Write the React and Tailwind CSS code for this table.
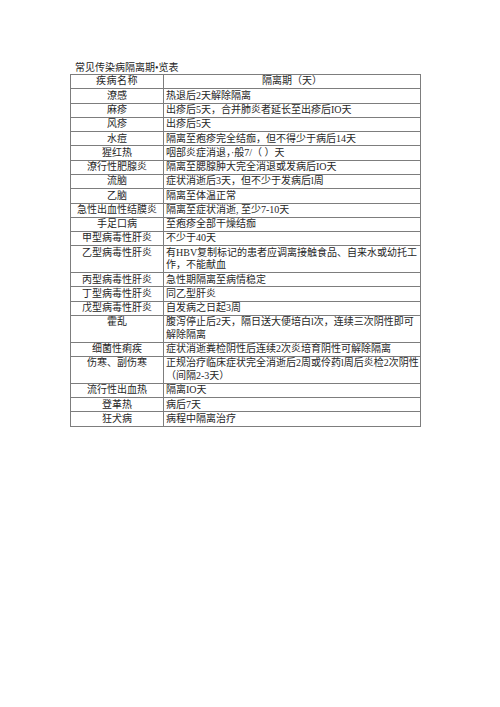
import React from "react";

const rows = [
  { name: "潦感", text: ["热退后2天解除隔离"] },
  { name: "麻疹", text: ["出疹后5天，合并肺炎者延长至出疹后IO天"] },
  { name: "风疹", text: ["出疹后5天"] },
  { name: "水痘", text: ["隔离至疱疹完全结痂，但不得少于病后14天"] },
  { name: "猩红热", text: ["咽部炎症消退，·般7/（ ）天"] },
  { name: "潦行性肥腺炎", text: ["隔离至腮腺肿大完全消退或发病后IO天"] },
  { name: "流脑", text: ["症状消逝后3天，但不少于发病后l周"] },
  { name: "乙脑", text: ["隔离至体温正常"] },
  { name: "急性出血性结膜炎", text: ["隔离至症状消逝, 至少7-10天"] },
  { name: "手足口病", text: ["至疱疹全部干燥结痂"] },
  { name: "甲型病毒性肝炎", text: ["不少于40天"] },
  {
    name: "乙型病毒性肝炎",
    text: ["有HBV复制标记的患者应调离接触食品、自来水或幼托工", "作，不能献血"],
  },
  { name: "丙型病毒性肝炎", text: ["急性期隔离至病情稳定"] },
  { name: "丁型病毒性肝炎", text: ["同乙型肝炎"] },
  { name: "戊型病毒性肝炎", text: ["自发病之日起3周"] },
  {
    name: "霍乱",
    text: ["腹泻停止后2天，隔日送大便培白l次，连续三次阴性即可", "解除隔离"],
  },
  { name: "细菌性痢疾", text: ["症状消逝粪检阴性后连续2次炎培育阴性可解除隔离"] },
  {
    name: "伤寒、副伤寒",
    text: ["正规治疗临床症状完全消逝后2周或伶药l周后炎检2次阴性", "（间隔2-3天）"],
  },
  { name: "流行性出血热", text: ["隔离IO天"] },
  { name: "登革热", text: ["病后7天"] },
  { name: "狂犬病", text: ["病程中隔离治疗"] },
];

export default function App() {
  return (
    <div className="min-h-[707px] w-[500px] bg-white pt-[62px] pl-[70px] font-['Liberation_Serif','Noto_Sans_CJK_SC',serif] text-[10px] text-[#262626]">
      <div className="pl-[5px] leading-[12px]">常见传染病隔离期•览表</div>
      <table className="w-[351px] table-fixed border-collapse border border-[#7d7d7d]">
        <colgroup>
          <col className="w-[93px]" />
          <col />
        </colgroup>
        <tbody>
          <tr>
            <td className="border border-[#7d7d7d] py-[0.4px] text-center align-top leading-[12.5px] tracking-[0.5px]">
              疾病名称
            </td>
            <td className="border border-[#7d7d7d] py-[0.4px] text-center align-top leading-[12.5px]">
              隔离期（天）
            </td>
          </tr>
          {rows.map((r) => (
            <tr key={r.name}>
              <td className="border border-[#7d7d7d] py-[0.4px] text-center align-top leading-[12.5px]">
                {r.name}
              </td>
              <td className="border border-[#7d7d7d] py-[0.4px] pl-[2px] align-top leading-[12.5px] whitespace-nowrap">
                {r.text.map((t, i) => (
                  <div key={i}>{t}</div>
                ))}
              </td>
            </tr>
          ))}
        </tbody>
      </table>
    </div>
  );
}
